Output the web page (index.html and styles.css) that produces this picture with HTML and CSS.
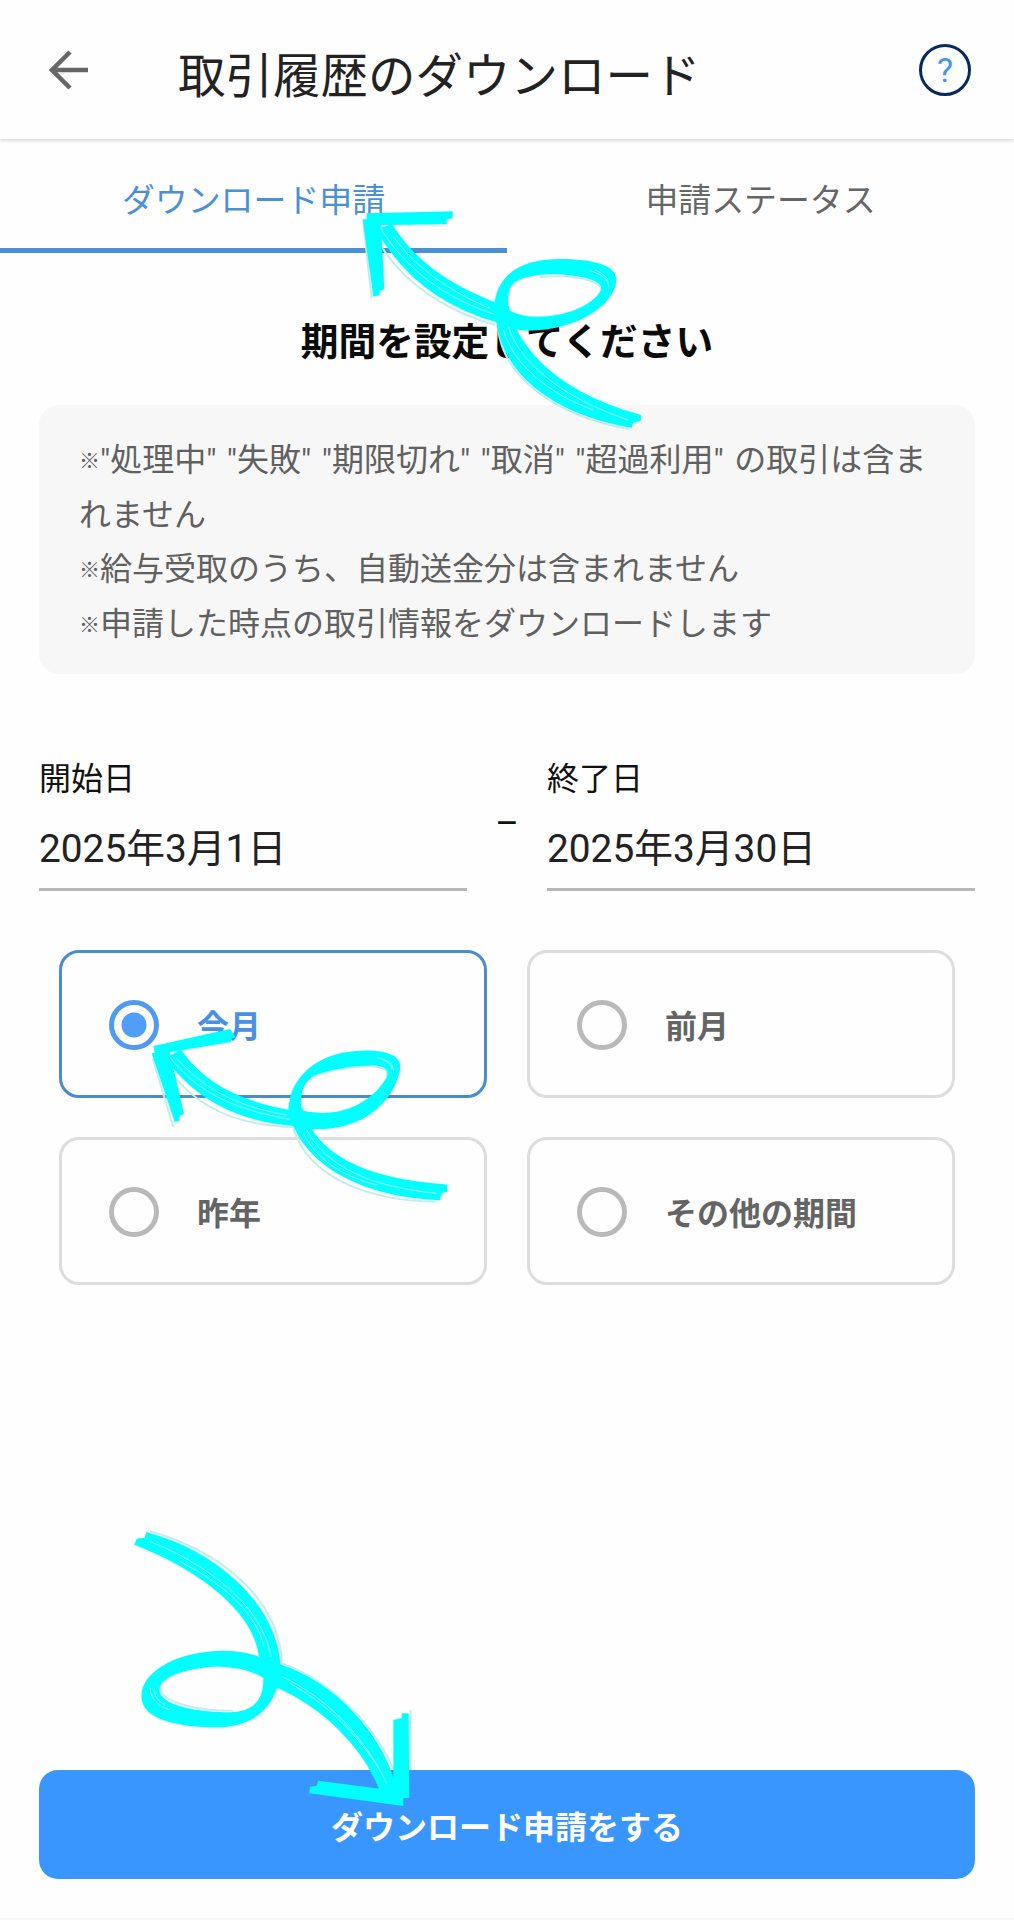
FILE: index.html
```html
<!DOCTYPE html>
<html lang="ja">
<head>
  <meta charset="UTF-8">
  <title>取引履歴のダウンロード</title>
  <link rel="stylesheet" href="styles.css">
</head>
<body>
  <div class="screen">
    <header class="header">
      <svg class="back" viewBox="0 0 40 40">
        <path d="M39 20H3M21 2L3 20L21 38"/>
      </svg>
      <h1>取引履歴のダウンロード</h1>
      <div class="help">?</div>
    </header>

    <nav class="tabs">
      <a class="tab active">ダウンロード申請</a>
      <a class="tab">申請ステータス</a>
    </nav>

    <main>
      <h2>期間を設定してください</h2>

      <div class="notice">
        <p><span class="mark">※</span>"処理中" "失敗" "期限切れ" "取消" "超過利用" の取引は含ま<br>れません</p>
        <p><span class="mark">※</span>給与受取のうち、自動送金分は含まれません</p>
        <p><span class="mark">※</span>申請した時点の取引情報をダウンロードします</p>
      </div>

      <div class="dates">
        <div class="date">
          <div class="label">開始日</div>
          <div class="value">2025年3月1日</div>
        </div>
        <div class="dash">–</div>
        <div class="date">
          <div class="label">終了日</div>
          <div class="value">2025年3月30日</div>
        </div>
      </div>

      <div class="options">
        <div class="option selected"><span class="radio"></span>今月</div>
        <div class="option"><span class="radio"></span>前月</div>
        <div class="option"><span class="radio"></span>昨年</div>
        <div class="option"><span class="radio"></span>その他の期間</div>
      </div>
    </main>

    <footer>
      <div class="btn">ダウンロード申請をする</div>
    </footer>

    <!-- hand-drawn arrows over the screen -->
    <svg class="arrow arrow-tab" viewBox="0 0 960 750">
      <path class="edge" d="M125 170C190 275 310 360 465 405M474 410C485 560 650 680 865 717M70 100L95 325M600 262C690 252 790 270 782 300"/>
      <g class="ink">
        <path d="M80 70L338 64V85L320 88V103L80 106Z"/>
        <path d="M68 88L122 88L133 298L120 302L118 316L100 320Z"/>
        <path class="tail" d="M155 105C220 210 320 285 480 345L475 396C310 350 190 260 112 120Z"/>
        <path fill-rule="evenodd" d="M462 350C472 240 560 207 660 207C760 207 830 225 829 270C825 340 720 422 560 422C510 420 480 405 462 375ZM505 360C503 310 500 278 560 262C620 245 700 255 745 266C780 276 790 290 780 305C755 345 680 380 590 380C550 380 530 372 505 360Z"/>
        <path class="tail" d="M505 350C515 420 590 590 900 677V691L877 696L873 711C640 670 470 550 468 350Z"/>
      </g>
      <path class="scratch" d="M122 115C200 240 310 320 460 372M160 140C230 235 330 305 450 355M505 410C540 520 670 625 865 690M490 420C520 520 620 610 760 660M750 242C785 252 806 270 806 290M765 240C790 250 802 262 803 275"/>
    </svg>

    <svg class="arrow arrow-month" viewBox="0 0 1380 1110">
      <path class="edge" d="M400 435C480 540 610 588 765 592M760 595C805 740 980 813 1190 815M338 385L400 592M840 432C930 405 1060 395 1040 440"/>
      <g class="ink">
        <path d="M340 348L570 297L587 322L573 326V336L345 374Z"/>
        <path d="M335 370L388 360L432 552L418 558L418 572L404 576Z"/>
        <path class="tail" d="M422 362C500 470 610 520 765 545L765 586C590 573 460 500 380 385Z"/>
        <path fill-rule="evenodd" d="M745 550C745 445 820 390 900 370C970 355 1080 355 1081 410C1075 480 1000 600 830 597C800 597 765 590 745 570ZM785 540C780 500 785 455 828 435C880 415 960 405 1010 407C1045 412 1050 430 1035 450C1000 505 930 550 850 548C820 548 800 546 785 540Z"/>
        <path class="tail" d="M785 535C825 680 980 750 1219 766V783L1202 787L1198 808C970 798 800 710 752 560Z"/>
      </g>
      <path class="scratch" d="M385 375C470 490 590 540 750 568M410 385C500 485 600 530 740 555M800 600C860 710 990 770 1190 790M790 610C830 690 910 740 1010 765M1010 383C1045 388 1062 405 1060 425M1030 392C1045 395 1055 405 1056 418"/>
    </svg>

    <svg class="arrow arrow-button" viewBox="0 0 960 960">
      <path class="edge" d="M90 64C290 120 478 260 486 460C650 520 770 660 822 780M872 600V780M120 530C120 580 250 605 340 602"/>
      <g class="ink">
        <path class="tail" d="M80 69C270 120 472 270 480 480L420 440C400 300 240 180 46 103L52 88L76 86Z"/>
        <path fill-rule="evenodd" d="M482 465C480 570 420 652 290 652C180 652 65 630 64 560C64 480 180 422 310 422C380 422 440 445 482 465ZM430 503C380 475 330 470 280 470C200 475 120 500 118 540C120 590 250 607 330 607C400 605 432 570 430 503Z"/>
        <path class="tail" d="M475 464C650 520 790 680 828 840L780 838C730 710 610 590 465 528L440 500V465Z"/>
        <path d="M570 830L590 827L595 812L850 845V888L568 850Z"/>
        <path d="M820 630L845 624V610H866L868 863L820 868Z"/>
      </g>
      <path class="scratch" d="M90 95C260 160 430 290 452 440M180 155C310 220 410 310 432 410M485 500C620 560 740 690 800 820M510 520C620 580 720 680 785 790M90 530C90 565 115 590 150 600M102 535C102 558 115 575 135 583"/>
    </svg>
  </div>
</body>
</html>
```

FILE: styles.css
```css
* {
  box-sizing: border-box;
}

body {
  margin: 0;
  background-color: #FEFEFE;
  font-family: Roboto, "Noto Sans CJK JP", sans-serif;
  font-size: 32px;
  color: #111;
}

h1, h2, p {
  margin: 0;
}

.screen {
  position: relative;
  display: flex;
  flex-direction: column;
  width: 1014px;
  height: 1920px;
  overflow: hidden;
  border-bottom: 2px solid #F7F7F7;
}

.header {
  display: flex;
  align-items: center;
  height: 139px;
  padding: 1px 43px 0 49px;
  box-shadow: 0 2px 3px #DDD;
}

.back {
  width: 40px;
  height: 40px;
  fill: none;
  stroke: #666;
  stroke-width: 4.5;
}

.header h1 {
  flex: 1;
  margin-left: 89px;
  padding-top: 13px;
  font-size: 47.5px;
  line-height: 70px;
  font-weight: 400;
  color: #222;
}

.help {
  width: 52px;
  height: 52px;
  border: 3.5px solid #08295C;
  border-radius: 50%;
  text-align: center;
  font-size: 34px;
  line-height: 46px;
  color: #4599DD;
}

.tabs {
  display: flex;
  height: 114px;
}

.tab {
  flex: 1;
  padding-top: 1px;
  text-align: center;
  font-size: 32.9px;
  line-height: 121px;
  color: #666;
}

.tab.active {
  color: #4A90D9;
  border-bottom: 5px solid #4A90D9;
}

main {
  flex: 1;
  padding: 62px 39px 0 39px;
}

h2 {
  text-align: center;
  font-size: 37.7px;
  line-height: 54px;
  color: #0A0A0A;
}

.notice {
  height: 269px;
  margin-top: 36px;
  padding: 28px 20px 0 40px;
  border-radius: 20px;
  background-color: #F7F7F7;
  color: #606060;
  line-height: 54.5px;
  word-spacing: 2.4px;
}

.mark {
  display: inline-block;
  width: 21px;
  font-size: 21px;
  line-height: 1;
  font-weight: bold;
  vertical-align: 3px;
}

.dates {
  display: flex;
  justify-content: space-between;
  height: 136px;
  margin-top: 81px;
}

.date {
  width: 428px;
  border-bottom: 3px solid #B8B8B8;
}

.label {
  line-height: 48px;
}

.value {
  margin-top: 11px;
  font-size: 38.8px;
  line-height: 70px;
  color: #222;
}

.dash {
  font-size: 36px;
  line-height: 138px;
}

.options {
  display: grid;
  grid-template-columns: 428px 428px;
  gap: 39px 40px;
  padding: 59px 20px 0;
}

.option {
  display: flex;
  align-items: center;
  height: 148px;
  padding-left: 47px;
  border: 3px solid #DDD;
  border-radius: 20px;
  font-weight: bold;
  color: #646464;
}

.radio {
  width: 50px;
  height: 50px;
  margin-top: 1px;
  margin-right: 38px;
  border: 5px solid #B9B9B9;
  border-radius: 50%;
}

.option.selected {
  border-color: #4A8CD0;
  color: #4A90E2;
}

.selected .radio {
  border-color: #509AEF;
  background: radial-gradient(circle, #509EF7 12px, transparent 13px);
}

footer {
  padding: 0 39px 39px 39px;
}

.btn {
  height: 109px;
  border-radius: 19px;
  background-color: #3996FF;
  text-align: center;
  line-height: 117px;
  font-weight: bold;
  color: #FFF;
}

.arrow {
  position: absolute;
}

.arrow-tab {
  left: 340px;
  top: 190px;
  width: 320px;
  height: 250px;
}

.arrow-month {
  left: 40px;
  top: 930px;
  width: 460px;
  height: 370px;
}

.arrow-button {
  left: 120px;
  top: 1510px;
  width: 320px;
  height: 320px;
}

.ink {
  fill: #00FFFF;
}

.tail {
  stroke: #00FFFF;
  stroke-width: 5;
}

.scratch {
  fill: none;
  stroke: #A8F4F6;
  stroke-width: 3;
}

.edge {
  fill: none;
  stroke: #C3EDED;
  stroke-width: 6;
}
```
